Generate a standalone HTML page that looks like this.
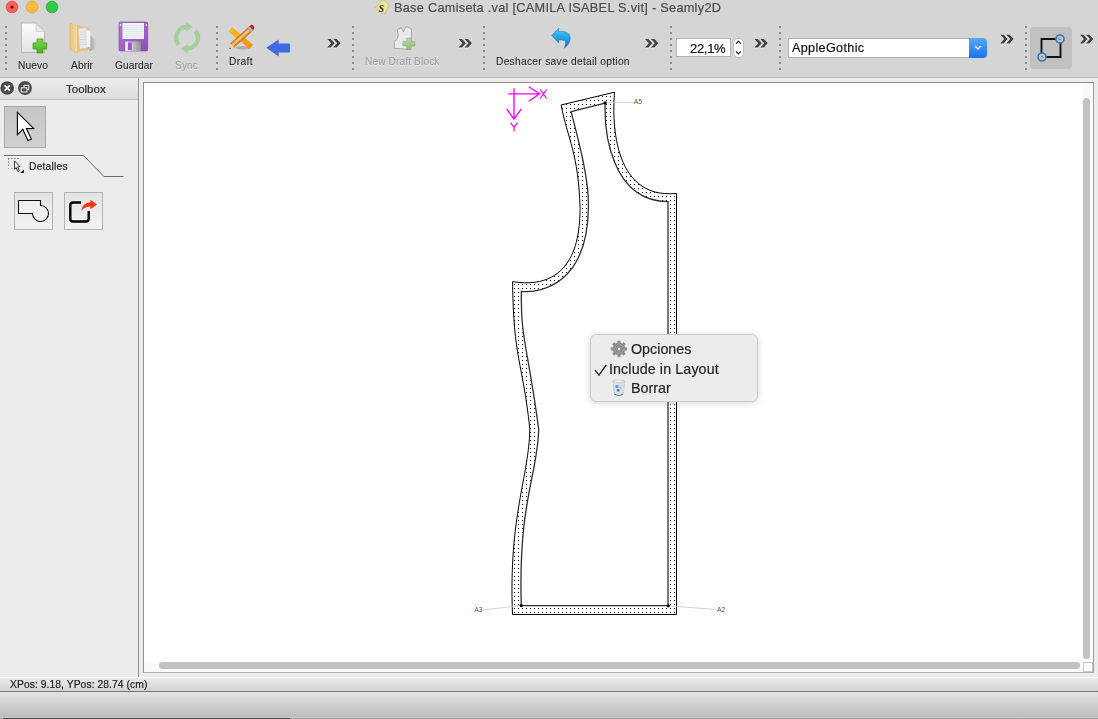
<!DOCTYPE html>
<html><head><meta charset="utf-8">
<style>
*{margin:0;padding:0;box-sizing:border-box}
html,body{width:1098px;height:719px;overflow:hidden}
body{position:relative;background:#d5d5d5;font-family:"Liberation Sans",sans-serif;color:#222}
.a{position:absolute}
.t,.lbl{position:absolute;white-space:nowrap;line-height:1;will-change:transform;-webkit-text-stroke:0.2px currentColor}
.lbl{text-shadow:0 0.8px 0 rgba(255,255,255,0.5);-webkit-text-stroke:0.1px currentColor}
.sep{position:absolute;top:26px;width:2px;height:44px;background-image:linear-gradient(to bottom,#8d8d8d 2px,transparent 2px);background-size:2px 6px}
svg{position:absolute;overflow:visible}
</style></head><body>
<!-- title bar -->
<svg class="a" style="left:0;top:0;position:absolute" width="70" height="16">
<circle cx="12" cy="7" r="5.9" fill="#fc605c" stroke="#e2463f" stroke-width="0.7"/>
<circle cx="12" cy="7" r="1.6" fill="#460804"/>
<circle cx="32" cy="7" r="5.9" fill="#fdbc40" stroke="#dfa033" stroke-width="0.7"/>
<circle cx="52" cy="7" r="5.9" fill="#34c84a" stroke="#29a939" stroke-width="0.7"/>
</svg>
<svg class="a" style="left:372px;top:0;position:absolute" width="20" height="16">
<path d="M3.5 8 L8.5 1.5 L10.5 0 L13 0.8 L17 5 L12.5 14.5 Z" fill="#ece39c" stroke="#bcb170" stroke-width="0.6"/>
<text x="6.5" y="11.5" font-family="Liberation Serif" font-style="italic" font-weight="bold" font-size="10" fill="#333">S</text>
</svg>
<!-- toolbar bottom line -->
<div class="a" style="left:0;top:77px;width:1098px;height:1px;background:#bcbcbc"></div>
<!-- content bg -->
<div class="a" style="left:0;top:78px;width:1098px;height:599px;background:#ececec"></div>
<!-- dock title -->
<div class="a" style="left:0;top:78px;width:138px;height:21px;background:linear-gradient(#ececec,#dcdcdc)"></div>
<div class="a" style="left:0;top:99px;width:138px;height:1px;background:#c4c4c4"></div>
<!-- divider -->
<div class="a" style="left:138px;top:78px;width:1px;height:599px;background:#8f8f8f"></div>
<!-- canvas frame -->
<div class="a" style="left:143px;top:82px;width:951px;height:591px;background:#fff;border:1px solid #8e8e8e;border-right-color:#a0a0a0;border-bottom-color:#b0b0b0"></div>
<!-- scroll tracks -->
<div class="a" style="left:1083px;top:83px;width:10px;height:579px;background:#fafafa"></div>
<div class="a" style="left:144px;top:662px;width:939px;height:10px;background:#fafafa"></div>
<div class="a" style="left:1083px;top:98px;width:7px;height:561px;background:#c2c2c2;border-radius:3.5px"></div>
<div class="a" style="left:159px;top:662px;width:921px;height:7px;background:#c2c2c2;border-radius:3.5px"></div>
<div class="a" style="left:1083px;top:662px;width:10px;height:10px;background:#fff;border:1px solid #c8c8c8"></div>
<!-- seps -->
<div class="sep" style="left:5px"></div>
<div class="sep" style="left:216px"></div>
<div class="sep" style="left:352px"></div>
<div class="sep" style="left:483px"></div>
<div class="sep" style="left:670px"></div>
<div class="sep" style="left:779px"></div>
<div class="sep" style="left:1025px"></div>
<!-- highlighted btn -->
<div class="a" style="left:1030px;top:27px;width:42px;height:42px;background:#c1c1c1;border-radius:4px"></div>
<!-- spinbox -->
<div class="a" style="left:676px;top:38px;width:55px;height:19px;background:#fff;border:1px solid #b4b4b4"></div>
<div class="a" style="left:732.5px;top:37.5px;width:11.5px;height:20.5px;background:#fff;border:1px solid #bdbdbd;border-radius:5px"></div>
<!-- combo -->
<div class="a" style="left:788px;top:37.5px;width:199px;height:20.5px;background:#fff;border:1px solid #b0b0b0;border-radius:0 4px 4px 0"></div>
<div class="a" style="left:969px;top:37.5px;width:18px;height:20.5px;background:linear-gradient(#5aa8fb,#1b72f0);border-radius:0 4px 4px 0"></div>
<!-- tool buttons -->
<div class="a" style="left:4px;top:106px;width:42px;height:42px;background:linear-gradient(#c6c6c6,#d0d0d0);border:1px solid #aaaaaa"></div>
<div class="a" style="left:14px;top:192px;width:39px;height:38px;background:linear-gradient(#e3e3e3,#f3f3f3);border:1px solid #b4b4b4"></div>
<div class="a" style="left:64px;top:192px;width:39px;height:38px;background:linear-gradient(#e3e3e3,#f3f3f3);border:1px solid #b4b4b4"></div>
<!-- status bar -->
<div class="a" style="left:0;top:677px;width:1098px;height:14px;background:linear-gradient(#ebebeb,#d3d3d3);border-top:1px solid #ffffff"></div>
<div class="a" style="left:0;top:691px;width:1098px;height:1px;background:#747474"></div>
<div class="a" style="left:0;top:692px;width:1098px;height:26px;background:linear-gradient(#e4e4e4,#bdbdbd);border-bottom:1px solid #cdcdcd"></div>
<div class="a" style="left:0;top:718px;width:1098px;height:1px;background:#9c9c9c"></div>
<div class="a" style="left:3px;top:718px;width:287px;height:1px;background:#4a4a44"></div>
<svg style="left:0;top:0" width="1098" height="719">
<defs>
<linearGradient id="gpage" x1="0" y1="0" x2="0" y2="1"><stop offset="0" stop-color="#fdfdfd"/><stop offset="1" stop-color="#e2e2e2"/></linearGradient>
<linearGradient id="ggreen" x1="0" y1="0" x2="0" y2="1"><stop offset="0" stop-color="#7ed84a"/><stop offset="1" stop-color="#48b020"/></linearGradient>
<linearGradient id="gfold" x1="0" y1="0" x2="1" y2="0"><stop offset="0" stop-color="#e9c07a"/><stop offset="1" stop-color="#f6dca6"/></linearGradient>
<linearGradient id="gpurp" x1="0" y1="0" x2="1" y2="1"><stop offset="0" stop-color="#b27ad6"/><stop offset="1" stop-color="#8a4cb8"/></linearGradient>
<linearGradient id="gshut" x1="0" y1="0" x2="1" y2="0"><stop offset="0" stop-color="#f0f0f0"/><stop offset="1" stop-color="#8e9098"/></linearGradient>
<linearGradient id="gruler" x1="0" y1="0" x2="1" y2="1"><stop offset="0" stop-color="#ffc400"/><stop offset="1" stop-color="#ff8c00"/></linearGradient>
<linearGradient id="gundo" x1="0" y1="0" x2="0" y2="1"><stop offset="0" stop-color="#5cc4f0"/><stop offset="0.45" stop-color="#1fa6e6"/><stop offset="1" stop-color="#1570b8"/></linearGradient>
<linearGradient id="gplus2" x1="0" y1="0" x2="0" y2="1"><stop offset="0" stop-color="#bcd8a6"/><stop offset="1" stop-color="#94bc7a"/></linearGradient>
</defs>
<!-- Nuevo -->
<path d="M21.5 23 H36 L44.5 31.5 V52.5 H21.5 Z" fill="url(#gpage)" stroke="#b9b9b9" stroke-width="1"/>
<path d="M36 23 L36 30.5 Q36 31.5 37 31.5 L44.5 31.5 Z" fill="#e6e6e6" stroke="#c4c4c4" stroke-width="0.6"/>
<path d="M37 39 H43 V43 H46.7 V49 H43 V53 H37 V49 H33 V43 H37 Z" fill="url(#ggreen)" stroke="#3f9a22" stroke-width="0.8"/>
<!-- Abrir -->
<defs><linearGradient id="gshad" x1="0" y1="0" x2="1" y2="0"><stop offset="0" stop-color="#8a8a8a" stop-opacity="0.7"/><stop offset="1" stop-color="#8a8a8a" stop-opacity="0"/></linearGradient></defs>
<path d="M89 33 L96.5 42 L95 50 L89 51 Z" fill="url(#gshad)"/>
<path d="M77 25 L89.5 27.5 L90 50 L77.5 52 Z" fill="#e6c27c"/>
<path d="M78.5 28.5 L86.5 27.5 L88 48 L79.5 49 Z" fill="#e9e9e9" stroke="#c4c4c4" stroke-width="0.5"/>
<path d="M85.5 29.5 L90.8 31 L90.2 47.5 L86.5 48 Z" fill="#f2f2f2" stroke="#cdcdcd" stroke-width="0.5"/>
<path d="M80 32h5.5M80 34.5h5.5M80 37h5.5M80 39.5h5.5M80 42h5.5M80 44.5h5.5" stroke="#c9c9c9" stroke-width="0.5"/>
<path d="M70 23 L77.5 26.2 L77.5 53 L70 49.5 Z" fill="url(#gfold)" stroke="#d6ad62" stroke-width="0.5"/>
<circle cx="88.2" cy="48" r="0.8" fill="#5a9ae0"/>
<!-- Guardar -->
<rect x="119" y="22" width="28.7" height="29" rx="1.2" fill="url(#gpurp)" stroke="#8048a8" stroke-width="0.6"/>
<rect x="122.5" y="23" width="21.5" height="16" fill="#eef4f8"/>
<path d="M123 25.5h20.5M123 27.5h20.5M123 29.5h20.5M123 31.5h20.5M123 33.5h20.5M123 35.5h20.5M123 37.5h20.5" stroke="#d4dde6" stroke-width="0.5"/>
<rect x="125.3" y="41.5" width="15.7" height="9.5" fill="url(#gshut)"/>
<rect x="128" y="42.5" width="3.8" height="7.5" fill="#9a5cc4"/>
<circle cx="120.5" cy="25" r="0.8" fill="#fff"/><circle cx="146.3" cy="25" r="0.8" fill="#fff"/>
<!-- Sync -->
<g fill="#a6cd9c"><path d="M176.96 46.17 A13.1 13.1 0 0 1 186.09 24.68 L186.25 22 L193.2 26.9 L186 31.6 L186.39 29.07 A8.7 8.7 0 0 0 180.34 43.34 Z"/><path d="M176.96 46.17 A13.1 13.1 0 0 1 186.09 24.68 L186.25 22 L193.2 26.9 L186 31.6 L186.39 29.07 A8.7 8.7 0 0 0 180.34 43.34 Z" transform="rotate(180 187 37.75)"/></g>
<!-- Draft -->
<ellipse cx="243" cy="47.8" rx="7.5" ry="1.8" fill="#8a8a8a" opacity="0.5"/>
<path d="M232.2 27.8 L252.7 44.8 L249.6 48.6 L229.1 31.6 Z" fill="url(#gruler)" stroke="#e08a00" stroke-width="0.4"/>
<path d="M247.6 28.1 L251.4 31.9 L234.2 47.3 L230.4 43.5 Z" fill="#d98526" stroke="#9a5a14" stroke-width="0.4"/>
<path d="M248.6 29.1 L250.2 30.7 L233 46.1 L231.4 44.5 Z" fill="#f3c47e"/>
<path d="M230.4 43.5 L234.2 47.3 L229.2 49.2 Z" fill="#f0cfa0"/>
<path d="M229.9 47.5 L231 48.5 L229.2 49.2 Z" fill="#222"/>
<path d="M247.6 28.1 L251.4 31.9 L253.2 30.1 L249.4 26.3 Z" fill="#b8b8b8" stroke="#555" stroke-width="0.3"/>
<path d="M249.4 26.3 L253.2 30.1 Q255.3 27.8 253.3 25.6 Q251.2 23.6 249.4 26.3 Z" fill="#c41e24"/>
<!-- blue arrow -->
<path d="M266.3 47.8 L278.6 39.5 V43.4 H289.9 V52.6 H278.6 V56.4 Z" fill="#4169e1"/>
<!-- chevrons -->
<g id="chev"><path d="M327.3 40 h3.4 l3.9 4.3 l-3.9 4.3 h-3.4 l3.9 -4.3 Z M333.3 40 h3.4 l3.9 4.3 l-3.9 4.3 h-3.4 l3.9 -4.3 Z" fill="#fff" opacity="0.55"/><path d="M327.3 39 h3.4 l3.9 4.3 l-3.9 4.3 h-3.4 l3.9 -4.3 Z M333.3 39 h3.4 l3.9 4.3 l-3.9 4.3 h-3.4 l3.9 -4.3 Z" fill="#404040"/></g>
<use href="#chev" x="131.3" y="0"/>
<use href="#chev" x="317.7" y="0"/>
<use href="#chev" x="427.1" y="0"/>
<use href="#chev" x="673" y="-4.2"/>
<use href="#chev" x="752.7" y="-4.2"/>
<!-- New Draft Block -->
<path d="M397.3 30 L401.2 27.6 L403.4 32 L405.8 26.6 L407.8 27.4 L411.4 28.8 L411.4 46.5 L409.5 49.2 L394.3 48.4 L394.3 41.2 Q398.3 40.2 398.3 35.2 Z" fill="#e9e9e9" stroke="#9c9c9c" stroke-width="0.8" stroke-linejoin="round"/>
<path d="M406.7 38 H411.1 V41.6 H414.9 V46 H411.1 V49.6 H406.7 V46 H402.9 V41.6 H406.7 Z" fill="url(#gplus2)" stroke="#8aae72" stroke-width="0.6"/>
<!-- undo -->
<path d="M551.6 35.5 L558.7 28.1 V31.4 C566 31 570.5 33 570.3 38.5 C570 43 567 46.5 564.1 48.3 C565.5 45.5 566.5 41 564 40.5 C562 40 560 40 558.7 40 V43.1 Z" fill="url(#gundo)" stroke="#1a6aa8" stroke-width="0.4"/>
<!-- spin arrows -->
<path d="M735.9 43.8 L738.4 41.2 L740.9 43.8 M735.9 51.4 L738.4 54 L740.9 51.4" fill="none" stroke="#222" stroke-width="1.2"/>
<!-- combo arrow -->
<path d="M975 46 L978 49 L981 46" fill="none" stroke="#fff" stroke-width="1.4"/>
<!-- highlighted btn icon -->
<path d="M1041.5 39 H1060.5 V57 H1041.5 Z" fill="none" stroke="#111" stroke-width="1.9"/>
<circle cx="1060" cy="39" r="4" fill="#c1c1c1" stroke="#3277c8" stroke-width="1.6"/>
<circle cx="1042" cy="57" r="4" fill="#c1c1c1" stroke="#3277c8" stroke-width="1.6"/>
<path d="M1059 38.5 l1.5 1.5 M1041.5 56 l1.5 1.5" stroke="#333" stroke-width="0.9"/>
<!-- dock buttons -->
<circle cx="7.2" cy="88" r="6.8" fill="#4a4a4a"/>
<path d="M4.6 85.4 L9.8 90.6 M9.8 85.4 L4.6 90.6" stroke="#fff" stroke-width="1.6"/>
<circle cx="25" cy="88" r="6.9" fill="#4a4a4a"/>
<rect x="24" y="85.3" width="4.8" height="4.3" fill="none" stroke="#fff" stroke-width="0.9"/>
<rect x="21.2" y="87.8" width="5.8" height="4.2" fill="#4a4a4a" stroke="#fff" stroke-width="0.9"/>
<!-- arrow tool -->
<path d="M17.4 112.3 L33.7 128.4 L26.4 128.6 L31.4 139.2 L27.9 140.6 L22.8 129.3 L17.4 134.7 Z" fill="#fff" stroke="#000" stroke-width="1.1" stroke-linejoin="miter"/>
<!-- tab line -->
<path d="M4 155.5 H83.6 L104 176.5 H123.6" fill="none" stroke="#6a6a6a" stroke-width="1"/>
<path d="M4 156.5 H83" fill="none" stroke="#fff" stroke-width="1"/>
<!-- detalles icon -->
<path d="M8.5 158.5 H19 M8.5 158.5 V167" fill="none" stroke="#555" stroke-width="1" stroke-dasharray="1 2"/>
<path d="M8 168.5 H13" fill="none" stroke="#aaa" stroke-width="1" stroke-dasharray="1.2 2"/>
<path d="M14.6 161 L20 166.6 L17.6 166.8 L19.4 170.8 L17.8 171.5 L16.1 167.6 L14.6 169.3 Z" fill="#fff" stroke="#222" stroke-width="0.9" stroke-linejoin="round"/>
<path d="M23.8 169.5 V173 H20.3 Z" fill="#111"/>
<!-- detail tool icons -->
<path d="M18.5 200.5 H40.5 V205.5 A8 8 0 1 1 32.5 213.5 H18.5 Z" fill="#f0f0f0" stroke="#111" stroke-width="1.1"/>
<path d="M81 202.5 H73 Q70.3 202.5 70.3 205.2 V218.8 Q70.3 221.5 73 221.5 H86 Q88.7 221.5 88.7 218.8 V211" fill="none" stroke="#000" stroke-width="2.4"/>
<path d="M81.3 210.8 Q82.5 202.8 90.4 202.3 V199.8 L97 204.4 L90.4 209.2 V206.6 Q85.5 206.5 81.3 210.8 Z" fill="#ff3300"/>
<!-- menu icons placeholder -->
<defs>
<pattern id="dots" x="0" y="0" width="4" height="4" patternUnits="userSpaceOnUse"><rect x="2" y="0" width="1" height="1" fill="#000"/></pattern>
</defs>
<!-- axes -->
<g stroke="#ff00ff" stroke-width="1.35" fill="none">
<path d="M508.1 93.8 H539.6 M528.7 86.8 L539.6 93.8 L528.7 101.2"/>
<path d="M514 88.3 V119 M506.6 108.9 L514 119.2 L521.4 108.9"/>
<path d="M540.2 89.6 L546.6 98.5 M546.6 89.6 L540.2 98.5" stroke-width="1.2"/>
<path d="M510.5 122.6 L514 127.2 L517.5 122.6 M514 127.2 V131.6" stroke-width="1.2"/>
</g>
<!-- piece -->
<path d="M561.1 105 L614.5 92.2 C612.67 114.63 609.94 200.02 676.50 193.40 L676.5 614.5 L512.5 614.5 C508.39 515.75 529.13 476.84 529.80 428.50 C522.53 361.14 513.37 359.05 512.60 281.70 C579.73 292.05 579.67 226.60 580.10 208.40 C578.45 152.99 567.68 139.14 561.10 105.00 Z M571.1 111.7 L605.2 103 C604.15 130.53 610.74 201.38 668.00 201.70 L668 605.7 L521.3 605.7 C518.08 501.48 537.72 474.81 538.70 429.20 C527.51 344.98 520.38 338.43 521.40 291.30 C543.44 293.30 586.97 282.44 588.40 208.40 C589.24 182.99 581.13 149.96 571.10 111.70 Z" fill="url(#dots)" fill-rule="evenodd"/>
<path d="M561.1 105 L614.5 92.2 C612.67 114.63 609.94 200.02 676.50 193.40 L676.5 614.5 L512.5 614.5 C508.39 515.75 529.13 476.84 529.80 428.50 C522.53 361.14 513.37 359.05 512.60 281.70 C579.73 292.05 579.67 226.60 580.10 208.40 C578.45 152.99 567.68 139.14 561.10 105.00 Z" fill="none" stroke="#000" stroke-width="1"/>
<path d="M571.1 111.7 L605.2 103 C604.15 130.53 610.74 201.38 668.00 201.70 L668 605.7 L521.3 605.7 C518.08 501.48 537.72 474.81 538.70 429.20 C527.51 344.98 520.38 338.43 521.40 291.30 C543.44 293.30 586.97 282.44 588.40 208.40 C589.24 182.99 581.13 149.96 571.10 111.70 Z" fill="none" stroke="#303030" stroke-width="1.3"/>
<!-- labels -->
<g stroke="#c8c8c8" stroke-width="0.8"><path d="M605 102.5 H633.5"/><path d="M483 610 L521 605.5"/><path d="M668 605.8 L716.5 609.5"/></g>
<circle cx="605.1" cy="102.8" r="1.6" fill="#000"/>
<circle cx="521.3" cy="605.6" r="1.6" fill="#000"/>
<circle cx="668.2" cy="605.8" r="1.6" fill="#000"/>
<text x="633.8" y="104" font-family="Liberation Sans" font-size="6.8" fill="#555">A5</text>
<text x="474.3" y="612" font-family="Liberation Sans" font-size="6.8" fill="#555">A3</text>
<text x="717" y="612" font-family="Liberation Sans" font-size="6.8" fill="#555">A2</text>
</svg>
<div class="a" style="left:589.8px;top:333.8px;width:168.6px;height:68.4px;background:#ececec;border:0.6px solid #cdcdcd;border-radius:6px;box-shadow:0 1px 7px rgba(0,0,0,0.16)"></div>
<svg style="left:0;top:0" width="1098" height="719">
<path d="M617.05 343.21 L617.75 342.72 L617.71 341.10 L620.19 341.10 L620.15 342.72 L620.85 343.21 L621.63 343.53 L622.47 343.68 L623.59 342.51 L625.34 344.26 L624.17 345.38 L624.32 346.22 L624.64 347.00 L625.13 347.70 L626.75 347.66 L626.75 350.14 L625.13 350.10 L624.64 350.80 L624.32 351.58 L624.17 352.42 L625.34 353.54 L623.59 355.29 L622.47 354.12 L621.63 354.27 L620.85 354.59 L620.15 355.08 L620.19 356.70 L617.71 356.70 L617.75 355.08 L617.05 354.59 L616.27 354.27 L615.43 354.12 L614.31 355.29 L612.56 353.54 L613.73 352.42 L613.58 351.58 L613.26 350.80 L612.77 350.10 L611.15 350.14 L611.15 347.66 L612.77 347.70 L613.26 347.00 L613.58 346.22 L613.73 345.38 L612.56 344.26 L614.31 342.51 L615.43 343.68 L616.27 343.53 Z" fill="#8e8e8e" stroke="#777" stroke-width="0.5" stroke-linejoin="round"/>
<circle cx="618.95" cy="348.9" r="4.6" fill="#a4a4a4"/><circle cx="618.95" cy="348.9" r="3.3" fill="none" stroke="#7a7a7a" stroke-width="1"/><circle cx="618.95" cy="348.9" r="1.9" fill="#959595"/><rect x="618.0500000000001" y="348.0" width="1.8" height="1.8" fill="#fafafa"/>
<path d="M595 370 L599 375.2 L606.3 364.8" fill="none" stroke="#1e1e1e" stroke-width="1.3"/>
<path d="M612.8 381 H624.8 L623.3 394 Q619 396.5 614.3 394 Z" fill="#d6dfe8" stroke="#b4bcc4" stroke-width="0.5"/>
<ellipse cx="618.8" cy="381.3" rx="6" ry="1.2" fill="#eef2f6" stroke="#a8b0b8" stroke-width="0.5"/>
<path d="M614.3 393.5 Q619 396.5 623.3 393.5 L623.2 394.6 Q619 397 614.4 394.6 Z" fill="#555"/>
<circle cx="617" cy="386.5" r="1.6" fill="#6a92d8"/><circle cx="618.2" cy="390.2" r="1.3" fill="#3466c8"/><circle cx="620.5" cy="388" r="1" fill="#9ab6e6"/>
</svg>
<div class="t" style="left:393.6px;top:2.35px;font-size:12.7px;color:#4b4b4b;letter-spacing:0.3px">Base Camiseta .val [CAMILA ISABEL S.vit] - Seamly2D</div>
<div class="lbl t" style="left:17.8px;top:61.46px;font-size:10.2px;color:#262626;letter-spacing:0.1px">Nuevo</div>
<div class="lbl t" style="left:71px;top:61.46px;font-size:10.2px;color:#262626;letter-spacing:0.1px">Abrir</div>
<div class="lbl t" style="left:115px;top:61.46px;font-size:10.2px;color:#262626;letter-spacing:0.1px">Guardar</div>
<div class="lbl t" style="left:175px;top:61.46px;font-size:10.2px;color:#a3a3a3;letter-spacing:0.1px">Sync</div>
<div class="lbl t" style="left:229px;top:56.96px;font-size:10.2px;color:#262626;letter-spacing:0.4px">Draft</div>
<div class="lbl t" style="left:365.3px;top:56.96px;font-size:10.2px;color:#a3a3a3;letter-spacing:0.1px">New Draft Block</div>
<div class="lbl t" style="left:495.8px;top:56.96px;font-size:10.2px;color:#262626;letter-spacing:0.3px">Deshacer save detail option</div>
<div class="t" style="left:690.3px;top:42.19px;font-size:13.0px;color:#111;letter-spacing:-0.3px">22,1%</div>
<div class="t" style="left:791.5px;top:42.43px;font-size:12.6px;color:#111;letter-spacing:0.35px">AppleGothic</div>
<div class="t" style="left:65.5px;top:84.46px;font-size:11.5px;color:#2a2a2a;">Toolbox</div>
<div class="t" style="left:28.6px;top:162.08px;font-size:10.3px;color:#2a2a2a;letter-spacing:0.2px">Detalles</div>
<div class="t" style="left:10.2px;top:680.08px;font-size:10.3px;color:#1e1e1e;letter-spacing:0.07px">XPos: 9.18, YPos: 28.74 (cm)</div>
<div class="t" style="left:631px;top:342.09px;font-size:14.3px;color:#262626;">Opciones</div>
<div class="t" style="left:609px;top:362.39px;font-size:14.3px;color:#262626;letter-spacing:0.1px">Include in Layout</div>
<div class="t" style="left:630.6px;top:380.99px;font-size:14.3px;color:#262626;">Borrar</div>
</body></html>
